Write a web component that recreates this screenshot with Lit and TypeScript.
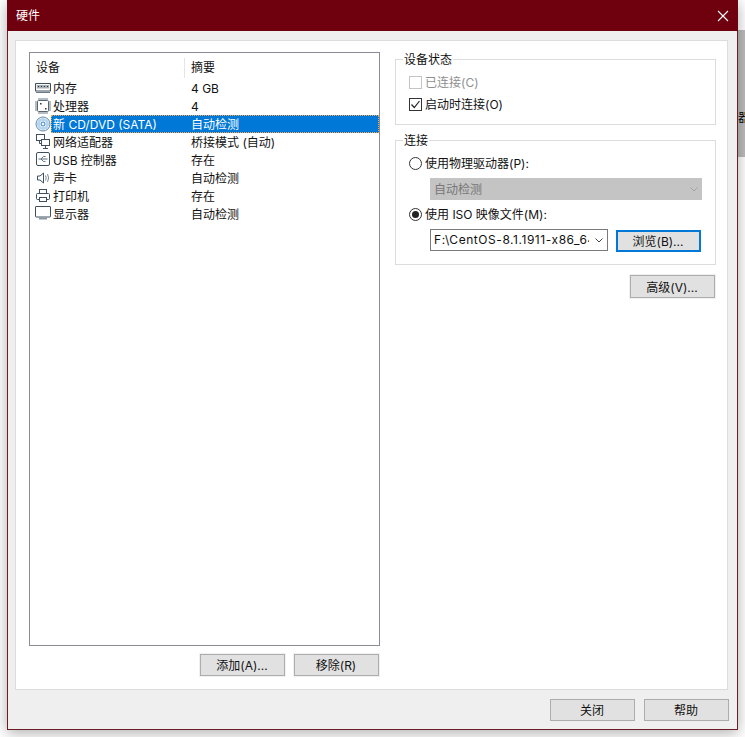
import { LitElement, html, css, svg } from "lit";
import { customElement } from "lit/decorators.js";

const ICONS: Record<string, unknown> = {
  mem: svg`<rect x="0.5" y="3.5" width="15" height="7.5" rx="0.5" stroke-width="1.2"/><rect x="2" y="5" width="12" height="3.5" fill="#a2adb6" stroke="none"/><path d="M3 6.5h1M6 6.5h1M9 6.5h1M12 6.5h1" stroke="#333"/><path d="M1 12.5h14" stroke="#6b7a85"/>`,
  cpu: svg`<rect x="2.5" y="2.5" width="11" height="11" rx="1" stroke="#56656f"/><path d="M4 0v2M6 0v2M8 0v2M10 0v2M12 0v2M4 14v2M6 14v2M8 14v2M10 14v2M12 14v2M0 4h2M0 6h2M0 8h2M0 10h2M0 12h2M14 4h2M14 6h2M14 8h2M14 10h2M14 12h2" stroke="#6b7a85"/><rect x="5" y="5" width="1.5" height="1.5" fill="#333" stroke="none"/><rect x="10" y="10" width="1.5" height="1.5" fill="#333" stroke="none"/>`,
  disc: svg`<circle cx="8" cy="8" r="7" stroke="#5f86a6"/><circle cx="8" cy="8" r="4.6" stroke="#b5d5ef" stroke-width="3"/><circle cx="8" cy="8" r="2" fill="#fff" stroke="#2a78bd"/>`,
  net: svg`<rect x="1.5" y="0.5" width="8" height="6"/><rect x="6.5" y="5.5" width="8" height="6" fill="#fff"/><path d="M10.5 11.5v2.5M8 14.5h5M4.5 6.5v3h2"/>`,
  usb: svg`<rect x="1.5" y="0.5" width="13" height="13" rx="1.5"/><path d="M3.5 7h9M6 7l2.5-2.5h2M6 7l2.5 2.5h2" stroke="#5f6f7b"/>`,
  snd: svg`<path d="M2.5 6v4h2.5l3.5 3v-10l-3.5 3z"/><path d="M10.5 5.5q1.5 2.5 0 5M12.5 4q2.2 4 0 8" stroke="#7b8a95"/>`,
  prn: svg`<rect x="4.5" y="1.5" width="7" height="4"/><rect x="1.5" y="5.5" width="13" height="6" rx="1"/><rect x="4.5" y="9.5" width="7" height="4" fill="#fff"/>`,
  mon: svg`<rect x="0.5" y="0.5" width="15" height="10.5" rx="0.5"/><path d="M4 12.5h8" stroke="#8a98a3" stroke-width="2"/>`,
};

const ROWS = [
  ["mem", "内存", "4 GB"],
  ["cpu", "处理器", "4"],
  ["disc", "新 CD/DVD (SATA)", "自动检测"],
  ["net", "网络适配器", "桥接模式 (自动)"],
  ["usb", "USB 控制器", "存在"],
  ["snd", "声卡", "自动检测"],
  ["prn", "打印机", "存在"],
  ["mon", "显示器", "自动检测"],
];

@customElement("app-root")
export class AppRoot extends LitElement {
  static styles = css`
    :host {
      display: block;
      position: relative;
      width: 745px;
      height: 737px;
      overflow: hidden;
      background: #fff;
      font: 12px/16px Inter, "Noto Sans CJK SC", sans-serif;
      color: #111;
    }
    .behind {
      position: absolute;
      left: 738px;
      top: 30px;
      width: 7px;
      height: 127px;
      background: #bdbdbd;
      overflow: hidden;
    }
    .behind span {
      position: absolute;
      left: 0;
      top: 80px;
      color: #000;
      white-space: nowrap;
    }
    .window {
      position: relative;
      box-sizing: border-box;
      margin-left: 7px;
      width: 731px;
      height: 730px;
      background: #efefef;
      border: 1px solid #6d1c24;
      border-top: 0;
      box-shadow: 0 3px 14px rgba(0, 0, 0, 0.32);
      display: flex;
      flex-direction: column;
    }
    .title {
      flex: none;
      height: 31px;
      margin: 0 -1px;
      padding: 0 0 0 9px;
      background: #6f000d;
      color: #fff;
      display: flex;
      align-items: center;
      justify-content: space-between;
    }
    .close { margin-right: 9px; display: block; }
    .panel {
      box-sizing: border-box;
      margin: 9px 9.5px 0 7px;
      height: 650px;
      background: #fff;
      border: 1px solid #dcdcdc;
      padding: 11px 10px 0 13px;
      display: flex;
      gap: 15px;
    }
    .left { width: 351px; flex: none; display: flex; flex-direction: column; gap: 8px; }
    .list {
      box-sizing: border-box;
      height: 594px;
      border: 1px solid #8b8b96;
      background: #fff;
      padding-top: 5px;
    }
    .head {
      display: grid;
      grid-template-columns: 154px 1fr;
      height: 20px;
      margin-bottom: 1px;
      align-items: center;
    }
    .head span { padding-left: 6px; }
    .head span + span {
      padding-left: 6px;
      border-left: 1px solid #e5e5e5;
      line-height: 20px;
    }
    .row {
      display: grid;
      grid-template-columns: 17px 133px 1fr;
      height: 18px;
      align-items: center;
      padding-left: 5px;
    }
    .row svg {
      width: 16px;
      height: 16px;
      fill: none;
      stroke: #3f4f5c;
      stroke-width: 1;
      display: block;
    }
    .name { white-space: nowrap; padding: 2px 0 0 1px; }
    .val { padding: 2px 0 0 6px; white-space: nowrap; }
    .sel { position: relative; }
    .sel .name, .sel .val { color: #fff; position: relative; z-index: 1; }
    .sel .hl {
      position: absolute;
      left: 21px;
      right: 0;
      top: 0;
      bottom: 0;
      background: #0078d7;
      outline: 1px dotted #f4a64e;
      outline-offset: -1px;
    }
    .btns { display: flex; justify-content: flex-end; gap: 9px; padding-right: 1px; }
    .btn {
      box-sizing: border-box;
      width: 85px;
      height: 22px;
      background: #e1e1e1;
      border: 1px solid #adadad;
      display: flex;
      align-items: center;
      justify-content: center;
      color: #111;
      white-space: nowrap;
      padding: 2px 1px 0 0;
    }
    .halo { outline: 1px solid #f0f0f0; }
    .right { width: 321px; flex: none; padding-top: 7px; display: flex; flex-direction: column; }
    .group {
      position: relative;
      box-sizing: border-box;
      border: 1px solid #dcdcdc;
      padding: 11px 13px 0;
    }
    .g1 { height: 66px; }
    .g2 { height: 125px; margin-top: 15px; }
    .legend {
      position: absolute;
      left: 7px;
      top: -8px;
      padding: 0 1px;
      background: #fff;
    }
    .opt { display: flex; align-items: center; height: 22px; gap: 3px; }
    .opt .t { padding-top: 2px; white-space: nowrap; }
    .dim { color: #8f8f8f; }
    .box {
      box-sizing: border-box;
      width: 13px;
      height: 13px;
      border: 1px solid #333;
      background: #fff;
      display: block;
    }
    .box.off { border-color: #c4c4c4; }
    .box svg { display: block; }
    .radio {
      box-sizing: border-box;
      width: 13px;
      height: 13px;
      border: 1px solid #333;
      border-radius: 50%;
      background: #fff;
      display: flex;
      align-items: center;
      justify-content: center;
    }
    .radio i { width: 7px; height: 7px; border-radius: 50%; background: #222; }
    .sub { margin-left: 21px; }
    .select {
      box-sizing: border-box;
      width: 272px;
      height: 22px;
      margin-top: 4px;
      margin-bottom: 3px;
      background: #c4c4c4;
      color: #777;
      display: flex;
      align-items: center;
      justify-content: space-between;
      padding: 0 4px 0 4px;
    }
    .select span { padding-top: 2px; }
    .combo-row { display: flex; gap: 8px; margin-top: 4px; }
    .combo {
      box-sizing: border-box;
      width: 178px;
      height: 22px;
      border: 1px solid #7a7a7a;
      background: #fff;
      display: flex;
      align-items: center;
      padding: 0 4px 0 3px;
      gap: 6px;
    }
    .combo .txt {
      flex: 1;
      min-width: 0;
      overflow: hidden;
      white-space: nowrap;
      letter-spacing: 0.55px;
    }
    .focus { margin-top: 1px; border: 2px solid #0078d7; padding-top: 1px; }
    .adv { align-self: flex-end; margin: 10px 1px 0 0; height: 23px; }
    .foot { display: flex; justify-content: flex-end; gap: 9px; padding: 9px 8px 0 0; }
  `;

  render() {
    const chev = (c: string) => html`<svg width="8" height="5" viewBox="0 0 8 5" fill="none" stroke=${c} style="flex:none"><path d="M0.5 0.5L4 4L7.5 0.5"/></svg>`;
    return html`
      <div class="behind"><span>器</span></div>
      <div class="window">
        <div class="title">
          <span>硬件</span>
          <svg class="close" width="12" height="12" viewBox="0 0 12 12" stroke="#fff" stroke-width="1.1"><path d="M1 1L11 11M11 1L1 11"/></svg>
        </div>
        <div class="panel">
          <div class="left">
            <div class="list">
              <div class="head"><span>设备</span><span>摘要</span></div>
              ${ROWS.map(([ic, n, v], i) => html`
                <div class="row ${i === 2 ? "sel" : ""}">
                  ${i === 2 ? html`<div class="hl"></div>` : ""}
                  <svg viewBox="0 0 16 16">${ICONS[ic]}</svg>
                  <span class="name">${n}</span>
                  <span class="val">${v}</span>
                </div>`)}
            </div>
            <div class="btns">
              <div class="btn halo">添加(A)...</div>
              <div class="btn halo">移除(R)</div>
            </div>
          </div>
          <div class="right">
            <div class="group g1">
              <span class="legend">设备状态</span>
              <div class="opt dim"><span class="box off"></span><span class="t">已连接(C)</span></div>
              <div class="opt">
                <span class="box"><svg width="11" height="11" viewBox="0 0 11 11" fill="none" stroke="#222" stroke-width="1.2"><path d="M1.5 5.5L4.3 8.5L9.5 2"/></svg></span><span class="t">启动时连接(O)</span>
              </div>
            </div>
            <div class="group g2">
              <span class="legend">连接</span>
              <div class="opt"><span class="radio"></span><span class="t">使用物理驱动器(P):</span></div>
              <div class="select sub"><span>自动检测</span>${chev("#a3a3a3")}</div>
              <div class="opt"><span class="radio"><i></i></span><span class="t">使用 ISO 映像文件(M):</span></div>
              <div class="combo-row sub">
                <div class="combo"><span class="txt">F:\\CentOS-8.1.1911-x86_64</span>${chev("#444")}</div>
                <div class="btn focus">浏览(B)...</div>
              </div>
            </div>
            <div class="btn adv halo">高级(V)...</div>
          </div>
        </div>
        <div class="foot">
          <div class="btn">关闭</div>
          <div class="btn">帮助</div>
        </div>
      </div>
    `;
  }
}
